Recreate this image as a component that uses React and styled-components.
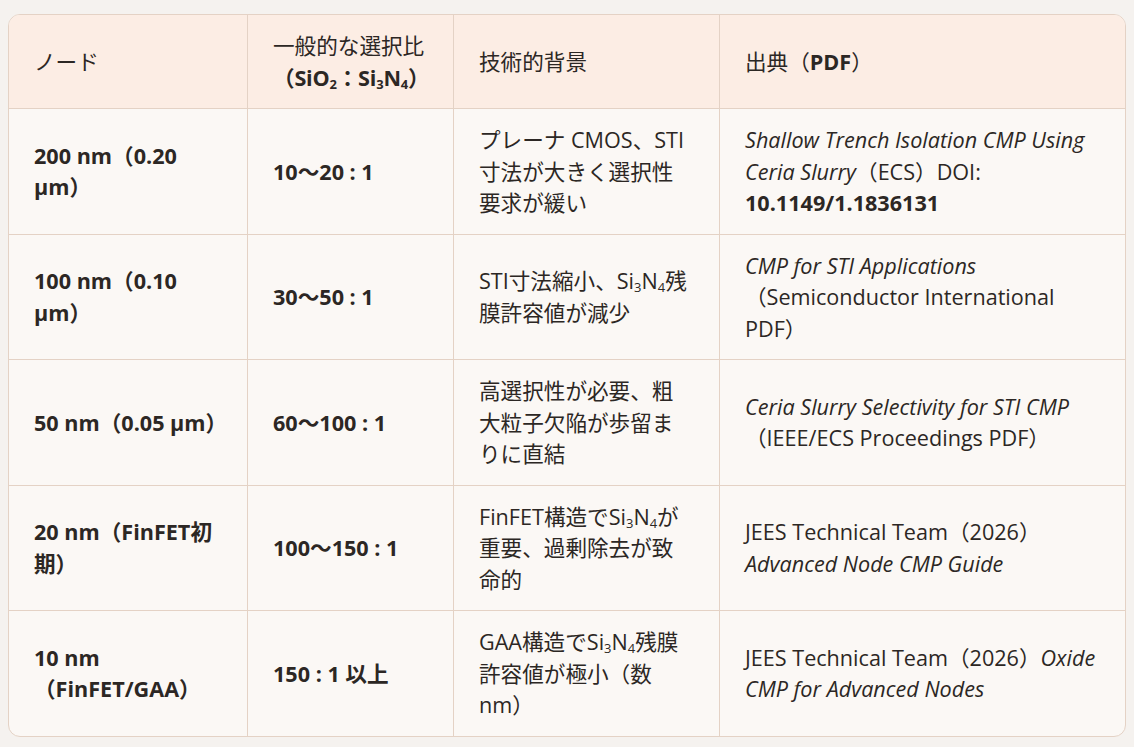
import React from "react";
import styled, { createGlobalStyle } from "styled-components";

const GlobalStyle = createGlobalStyle`
  html, body {
    margin: 0;
    padding: 0;
    background: #f5f2ef;
  }
  body {
    font-family: "Open Sans", "Noto Sans CJK JP", sans-serif;
    color: #2c2724;
  }
`;

const Page = styled.div`
  padding: 14px 8px 8px;
`;

const Frame = styled.div`
  border: 1px solid #e4d2c5;
  border-radius: 12px;
  overflow: hidden;
  background: #fbf8f5;
`;

const Table = styled.table`
  width: 100%;
  border-collapse: separate;
  border-spacing: 0;
  table-layout: fixed;
  font-size: 21.6px;
  line-height: 31.5px;
`;

const Col = styled.col`
  width: ${(p) => p.$w}px;
`;

const HeadCell = styled.th`
  background: #fcede4;
  text-align: left;
  font-weight: 400;
  vertical-align: middle;
  padding: 15px 25px;
  border-bottom: 1px solid #e4d2c5;
  border-right: 1px solid #e4d2c5;
  &:last-child {
    border-right: none;
  }
`;

const Cell = styled.td`
  vertical-align: middle;
  padding: 15px 25px;
  border-right: 1px solid #e4d2c5;
  border-bottom: ${(p) => (p.$last ? "none" : "1px solid #e4d2c5")};
  font-weight: ${(p) => (p.$bold ? 700 : 400)};
  &:last-child {
    border-right: none;
  }
`;

const Strong = styled.strong`
  font-weight: 700;
`;

const Formula = styled.strong`
  font-weight: 700;
  display: inline-block;
  white-space: nowrap;
  letter-spacing: -0.2px;
`;

const Em = styled.em`
  font-style: italic;
`;

const Sub = styled.sub`
  font-size: 0.6em;
  line-height: 0;
  vertical-align: -0.2em;
`;

const Si3N4 = () => (
  <>
    Si<Sub>3</Sub>N<Sub>4</Sub>
  </>
);

const rows = [
  {
    node: "200 nm（0.20 μm）",
    ratio: "10〜20 : 1",
    bg: <>プレーナ CMOS、STI寸法が大きく選択性要求が緩い</>,
    src: (
      <>
        <Em>Shallow Trench Isolation CMP Using Ceria Slurry</Em>（ECS）DOI:{" "}
        <Strong>10.1149/1.1836131</Strong>
      </>
    ),
  },
  {
    node: "100 nm（0.10 μm）",
    ratio: "30〜50 : 1",
    bg: (
      <>
        STI寸法縮小、<Si3N4 />残膜許容値が減少
      </>
    ),
    src: (
      <>
        <Em>CMP for STI Applications</Em>（Semiconductor International PDF）
      </>
    ),
  },
  {
    node: "50 nm（0.05 μm）",
    ratio: "60〜100 : 1",
    bg: <>高選択性が必要、粗大粒子欠陥が歩留まりに直結</>,
    src: (
      <>
        <Em>Ceria Slurry Selectivity for STI CMP</Em>（IEEE/ECS Proceedings PDF）
      </>
    ),
  },
  {
    node: "20 nm（FinFET初期）",
    ratio: "100〜150 : 1",
    bg: (
      <>
        FinFET構造で<Si3N4 />が重要、過剰除去が致命的
      </>
    ),
    src: (
      <>
        JEES Technical Team（2026）<Em>Advanced Node CMP Guide</Em>
      </>
    ),
  },
  {
    node: "10 nm（FinFET/GAA）",
    ratio: "150 : 1 以上",
    bg: (
      <>
        GAA構造で<Si3N4 />残膜許容値が極小（数nm）
      </>
    ),
    src: (
      <>
        JEES Technical Team（2026）<Em>Oxide CMP for Advanced Nodes</Em>
      </>
    ),
  },
];

export default function App() {
  return (
    <>
      <GlobalStyle />
      <Page>
        <Frame>
          <Table>
            <colgroup>
              <Col $w={239} />
              <Col $w={206} />
              <Col $w={266} />
              <Col $w={405} />
            </colgroup>
            <thead>
              <tr>
                <HeadCell>ノード</HeadCell>
                <HeadCell>
                  一般的な選択比
                  <Formula>
                    （SiO<Sub>2</Sub>：<Si3N4 />）
                  </Formula>
                </HeadCell>
                <HeadCell>技術的背景</HeadCell>
                <HeadCell>
                  出典（<Strong>PDF</Strong>）
                </HeadCell>
              </tr>
            </thead>
            <tbody>
              {rows.map((r, i) => (
                <tr key={i}>
                  <Cell $bold $last={i === rows.length - 1}>
                    {r.node}
                  </Cell>
                  <Cell $bold $last={i === rows.length - 1}>
                    {r.ratio}
                  </Cell>
                  <Cell $last={i === rows.length - 1}>{r.bg}</Cell>
                  <Cell $last={i === rows.length - 1}>{r.src}</Cell>
                </tr>
              ))}
            </tbody>
          </Table>
        </Frame>
      </Page>
    </>
  );
}
